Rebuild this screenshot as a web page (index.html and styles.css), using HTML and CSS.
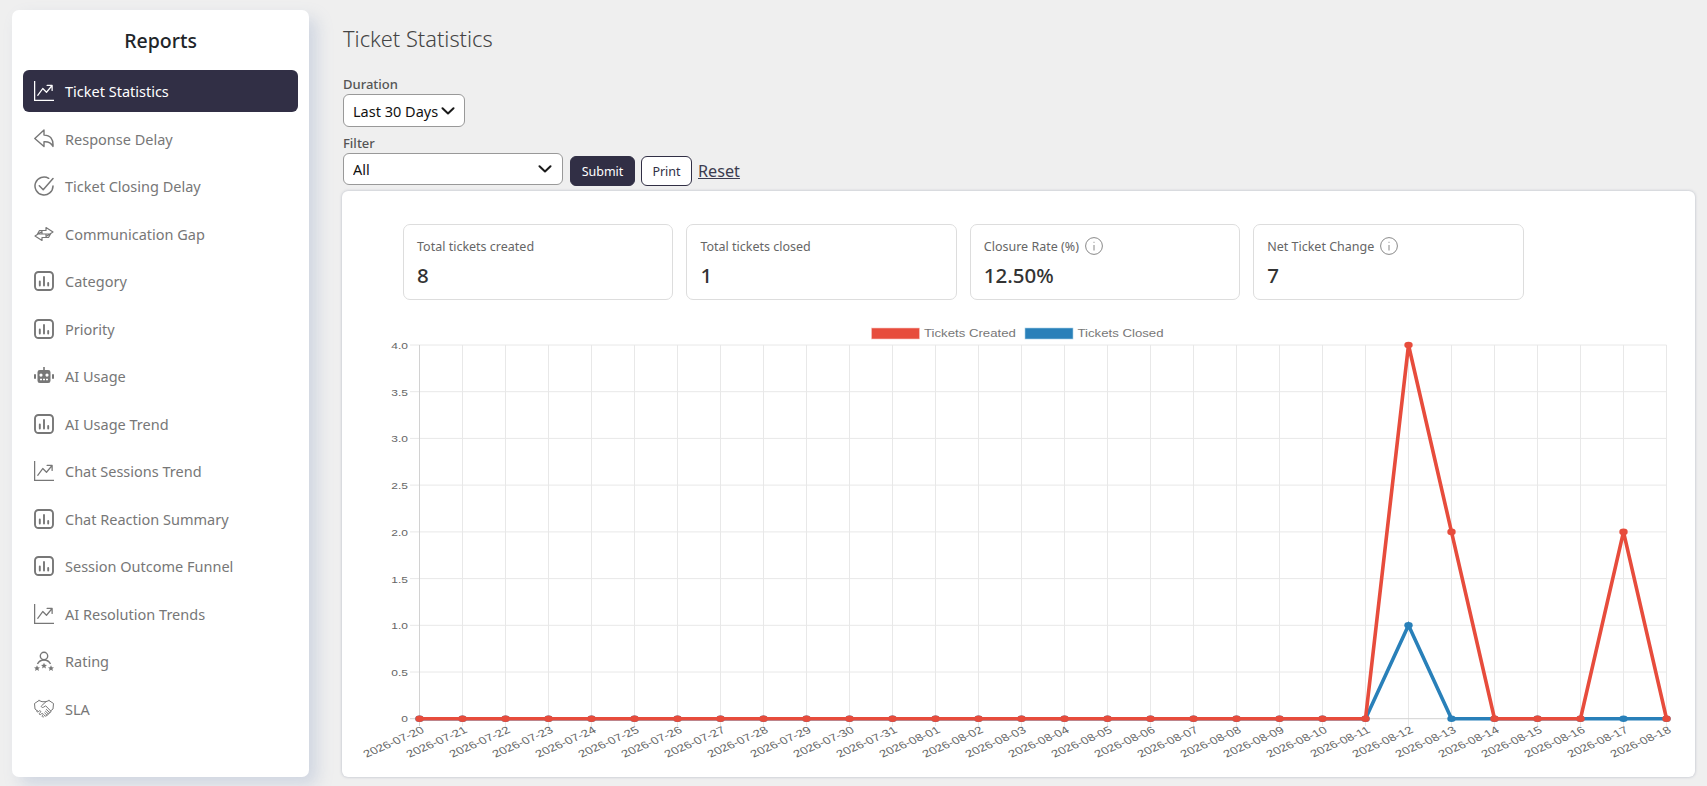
FILE: index.html
```html
<!DOCTYPE html>
<html lang="en">
<head>
<meta charset="utf-8">
<title>Ticket Statistics</title>
<link rel="stylesheet" href="styles.css">
</head>
<body>
<svg class="defs" aria-hidden="true">
  <symbol id="i-trend" viewBox="0 0 16 16"><path fill="currentColor" fill-rule="evenodd" d="M0 0h1v15h15v1H0zm10 3.5a.5.5 0 0 1 .5-.5h4a.5.5 0 0 1 .5.5v4a.5.5 0 0 1-1 0V4.9l-3.613 4.417a.5.5 0 0 1-.74.037L7.06 6.767l-3.656 5.027a.5.5 0 0 1-.808-.588l4-5.5a.5.5 0 0 1 .758-.06l2.609 2.61L13.445 4H10.5a.5.5 0 0 1-.5-.5"/></symbol>
  <symbol id="i-bars" viewBox="0 0 20 20"><rect x="1" y="1" width="18" height="18" rx="3.5" fill="none" stroke="currentColor" stroke-width="1.9"/><path d="M5.800 10.500v4M10 6v8.500M14.200 12v2.500" fill="none" stroke="currentColor" stroke-width="1.900" stroke-linecap="round"/></symbol>
  <symbol id="i-chev" viewBox="0 0 14 8"><path d="M1.500 1.200 7 6.500l5.500-5.300" fill="none" stroke="#1a1a1a" stroke-width="2" stroke-linecap="round" stroke-linejoin="round"/></symbol>
  <marker id="dot-r" viewBox="-5 -5 10 10" markerUnits="userSpaceOnUse" markerWidth="10" markerHeight="10"><ellipse rx="4.200" ry="3.300" fill="#e74c3c"/></marker>
  <marker id="dot-b" viewBox="-5 -5 10 10" markerUnits="userSpaceOnUse" markerWidth="10" markerHeight="10"><ellipse rx="4.200" ry="3.300" fill="#2980b9"/></marker>
</svg>
<div class="app">
  <aside class="sidebar">
    <h2 class="side-title">Reports</h2>
    <nav class="menu">
      <a class="item active"><svg class="ico"><use href="#i-trend"/></svg><span>Ticket Statistics</span></a>
      <a class="item"><svg class="ico" viewBox="0 0 20 20"><path d="M10 1 .8 9.500l9.200 8V12.800h1.200c3.400 0 6 1.300 7.800 4.700.6-7.500-2.800-11.400-9-11.400z" fill="none" stroke="currentColor" stroke-width="1.400" stroke-linejoin="round"/></svg><span>Response Delay</span></a>
      <a class="item"><svg class="ico" viewBox="0 0 20 20"><path d="M19 10a9 9 0 1 1-4.300-7.700M5.300 9.800l3.900 3.900 9.800-11.200" fill="none" stroke="currentColor" stroke-width="1.500" stroke-linecap="round" stroke-linejoin="round"/></svg><span>Ticket Closing Delay</span></a>
      <a class="item"><svg class="ico" viewBox="0 0 20 20"><path d="M3.500 10 5.500 6.500H12v-3L19 8l-7 4.500V10zM16.500 10l-2 3.500H8v3L1 12l7-4.500V10z" fill="none" stroke="currentColor" stroke-width="1.200" stroke-linejoin="round"/></svg><span>Communication Gap</span></a>
      <a class="item"><svg class="ico"><use href="#i-bars"/></svg><span>Category</span></a>
      <a class="item"><svg class="ico"><use href="#i-bars"/></svg><span>Priority</span></a>
      <a class="item"><svg class="ico" viewBox="0 0 20 20"><path fill="currentColor" fill-rule="evenodd" d="M9.200 1h1.600v3h3.400a2.300 2.300 0 0 1 2.300 2.300v8.400a2.300 2.300 0 0 1-2.300 2.300H5.800a2.300 2.300 0 0 1-2.300-2.300V6.300A2.300 2.300 0 0 1 5.800 4h3.400zM7 7.500a1.600 1.600 0 1 0 0 3.200 1.600 1.600 0 0 0 0-3.200zm6 0a1.600 1.600 0 1 0 0 3.200 1.600 1.600 0 0 0 0-3.200zM6 12.800v1.500h2v-1.500zm3 0v1.500h2v-1.500zm3 0v1.500h2v-1.500z"/><rect x="0" y="8" width="2" height="5" rx="1" fill="currentColor"/><rect x="18" y="8" width="2" height="5" rx="1" fill="currentColor"/></svg><span>AI Usage</span></a>
      <a class="item"><svg class="ico"><use href="#i-bars"/></svg><span>AI Usage Trend</span></a>
      <a class="item"><svg class="ico"><use href="#i-trend"/></svg><span>Chat Sessions Trend</span></a>
      <a class="item"><svg class="ico"><use href="#i-bars"/></svg><span>Chat Reaction Summary</span></a>
      <a class="item"><svg class="ico"><use href="#i-bars"/></svg><span>Session Outcome Funnel</span></a>
      <a class="item"><svg class="ico"><use href="#i-trend"/></svg><span>AI Resolution Trends</span></a>
      <a class="item"><svg class="ico" viewBox="0 0 20 20"><circle cx="10" cy="5" r="3.700" fill="none" stroke="currentColor" stroke-width="1.400"/><path d="M3.500 13C4.800 10.300 7 9 10 9s5.200 1.300 6.500 4" fill="none" stroke="currentColor" stroke-width="1.400"/><path fill="currentColor" d="M3 14.300l.9 1.900 2.100.2-1.600 1.400.5 2.100L3 18.800l-1.900 1.100.5-2.100L0 16.400l2.100-.2zM10 11.800l.9 1.900 2.100.2-1.600 1.400.5 2.100-1.900-1.100-1.900 1.100.5-2.100-1.600-1.400 2.100-.2zM17 14.300l.9 1.900 2.100.2-1.600 1.400.5 2.100-1.900-1.100-1.900 1.100.5-2.100-1.600-1.400 2.100-.2z"/></svg><span>Rating</span></a>
      <a class="item"><svg class="ico" viewBox="0 0 20 20"><g fill="none" stroke="currentColor" stroke-width="1" stroke-linejoin="round" stroke-linecap="round"><path d="M5 1.500.5 4.500 1 10l2.500 2M15 1.500l4.500 3L19 10l-2.500 2"/><path d="M5 1.500l3 1.200h4l3-1.200"/><path d="M12 2.700 7.500 6.800c-.8 1.300 1 2.300 2.200 1.300l2-1.300 5 5.200c.8 1-.4 2-1.300 1.300l-3-2.800"/><path d="M15.400 13.300c.6 1-.4 1.900-1.300 1.300l-2.600-2.300M14.100 14.600c.5 1-.5 1.900-1.400 1.300l-2-1.900M12.700 15.900c.4 1-.7 1.700-1.500 1.100L10 16"/><path d="M3 11.500c-.8.900.3 2 1.200 1.300l1-.9c.9-.7 2 .3 1.300 1.300l-1 1c-.8.900.4 2 1.300 1.200l.9-.8c.9-.6 1.900.4 1.300 1.300l-.7.800c-.7 1 .9 1.900 1.700.9"/></g></svg><span>SLA</span></a>
    </nav>
  </aside>
  <main class="main">
    <h1 class="page-title">Ticket Statistics</h1>
    <label class="field-label" for="duration">Duration</label>
    <div class="row">
      <div class="select-wrap"><select id="duration" class="select select-short"><option>Last 30 Days</option></select><svg class="chev chev-short"><use href="#i-chev"/></svg></div>
    </div>
    <label class="field-label label-filter" for="filter">Filter</label>
    <div class="row actions">
      <div class="select-wrap"><select id="filter" class="select select-wide"><option>All</option></select><svg class="chev chev-wide"><use href="#i-chev"/></svg></div>
      <button class="btn btn-dark">Submit</button>
      <button class="btn btn-outline">Print</button>
      <a class="reset">Reset</a>
    </div>
    <section class="card">
      <div class="stats">
        <div class="stat"><div class="stat-label">Total tickets created</div><div class="stat-value">8</div></div>
        <div class="stat"><div class="stat-label">Total tickets closed</div><div class="stat-value">1</div></div>
        <div class="stat"><div class="stat-label">Closure Rate (%)<svg class="info" viewBox="0 0 18 18"><circle cx="9" cy="9" r="8.400"/><path d="M9 8v5.500M9 4.800v1"/></svg></div><div class="stat-value">12.50%</div></div>
        <div class="stat"><div class="stat-label">Net Ticket Change<svg class="info" viewBox="0 0 18 18"><circle cx="9" cy="9" r="8.400"/><path d="M9 8v5.500M9 4.800v1"/></svg></div><div class="stat-value">7</div></div>
      </div>
      <svg class="chart" viewBox="342 314 1352 462">
        <path class="grid" d="M410 345H1666.500M410 391.700H1666.500M410 438.400H1666.500M410 485.100H1666.500M410 531.900H1666.500M410 578.600H1666.500M410 625.300H1666.500M410 672H1666.500M462.500 345V726M505.500 345V726M548.500 345V726M591.500 345V726M634.500 345V726M677.500 345V726M720.500 345V726M763.500 345V726M806.500 345V726M849.500 345V726M892.500 345V726M935.500 345V726M978.500 345V726M1021.500 345V726M1064.500 345V726M1107.500 345V726M1150.500 345V726M1193.500 345V726M1236.500 345V726M1279.500 345V726M1322.500 345V726M1365.500 345V726M1408.500 345V726M1451.500 345V726M1494.500 345V726M1537.500 345V726M1580.500 345V726M1623.500 345V726M1666.500 345V726"/>
        <path class="grid-zero" d="M419.500 345V726M410 718.700H1666.500"/>
        <g class="legend">
          <rect class="box-red" x="871.500" y="328" width="48" height="11"/>
          <text transform="translate(924 337) scale(1.200 .92)">Tickets Created</text>
          <rect class="box-blue" x="1025" y="328" width="48" height="11"/>
          <text transform="translate(1077.500 337) scale(1.200 .92)">Tickets Closed</text>
        </g>
        <g class="ticks-y">
          <text transform="translate(408 349) scale(1.200 .92)">4.0</text>
          <text transform="translate(408 395.700) scale(1.200 .92)">3.5</text>
          <text transform="translate(408 442.400) scale(1.200 .92)">3.0</text>
          <text transform="translate(408 489.100) scale(1.200 .92)">2.5</text>
          <text transform="translate(408 535.900) scale(1.200 .92)">2.0</text>
          <text transform="translate(408 582.600) scale(1.200 .92)">1.5</text>
          <text transform="translate(408 629.300) scale(1.200 .92)">1.0</text>
          <text transform="translate(408 676) scale(1.200 .92)">0.5</text>
          <text transform="translate(408 721.700) scale(1.200 .92)">0</text>
        </g>
        <polyline class="line-blue" points="419.500 718.700 462.500 718.700 505.500 718.700 548.500 718.700 591.500 718.700 634.500 718.700 677.500 718.700 720.500 718.700 763.500 718.700 806.500 718.700 849.500 718.700 892.500 718.700 935.500 718.700 978.500 718.700 1021.500 718.700 1064.500 718.700 1107.500 718.700 1150.500 718.700 1193.500 718.700 1236.500 718.700 1279.500 718.700 1322.500 718.700 1365.500 718.700 1408.500 625.300 1451.500 718.700 1494.500 718.700 1537.500 718.700 1580.500 718.700 1623.500 718.700 1666.500 718.700"/>
        <polyline class="line-red" points="419.500 718.700 462.500 718.700 505.500 718.700 548.500 718.700 591.500 718.700 634.500 718.700 677.500 718.700 720.500 718.700 763.500 718.700 806.500 718.700 849.500 718.700 892.500 718.700 935.500 718.700 978.500 718.700 1021.500 718.700 1064.500 718.700 1107.500 718.700 1150.500 718.700 1193.500 718.700 1236.500 718.700 1279.500 718.700 1322.500 718.700 1365.500 718.700 1408.500 345 1451.500 531.900 1494.500 718.700 1537.500 718.700 1580.500 718.700 1623.500 531.900 1666.500 718.700"/>
        <g class="ticks-x">
          <text transform="translate(425 732) scale(1.200 .92) rotate(-30)">2026-07-20</text>
          <text transform="translate(468 732) scale(1.200 .92) rotate(-30)">2026-07-21</text>
          <text transform="translate(511 732) scale(1.200 .92) rotate(-30)">2026-07-22</text>
          <text transform="translate(554 732) scale(1.200 .92) rotate(-30)">2026-07-23</text>
          <text transform="translate(597 732) scale(1.200 .92) rotate(-30)">2026-07-24</text>
          <text transform="translate(640 732) scale(1.200 .92) rotate(-30)">2026-07-25</text>
          <text transform="translate(683 732) scale(1.200 .92) rotate(-30)">2026-07-26</text>
          <text transform="translate(726 732) scale(1.200 .92) rotate(-30)">2026-07-27</text>
          <text transform="translate(769 732) scale(1.200 .92) rotate(-30)">2026-07-28</text>
          <text transform="translate(812 732) scale(1.200 .92) rotate(-30)">2026-07-29</text>
          <text transform="translate(855 732) scale(1.200 .92) rotate(-30)">2026-07-30</text>
          <text transform="translate(898 732) scale(1.200 .92) rotate(-30)">2026-07-31</text>
          <text transform="translate(941 732) scale(1.200 .92) rotate(-30)">2026-08-01</text>
          <text transform="translate(984 732) scale(1.200 .92) rotate(-30)">2026-08-02</text>
          <text transform="translate(1027 732) scale(1.200 .92) rotate(-30)">2026-08-03</text>
          <text transform="translate(1070 732) scale(1.200 .92) rotate(-30)">2026-08-04</text>
          <text transform="translate(1113 732) scale(1.200 .92) rotate(-30)">2026-08-05</text>
          <text transform="translate(1156 732) scale(1.200 .92) rotate(-30)">2026-08-06</text>
          <text transform="translate(1199 732) scale(1.200 .92) rotate(-30)">2026-08-07</text>
          <text transform="translate(1242 732) scale(1.200 .92) rotate(-30)">2026-08-08</text>
          <text transform="translate(1285 732) scale(1.200 .92) rotate(-30)">2026-08-09</text>
          <text transform="translate(1328 732) scale(1.200 .92) rotate(-30)">2026-08-10</text>
          <text transform="translate(1371 732) scale(1.200 .92) rotate(-30)">2026-08-11</text>
          <text transform="translate(1414 732) scale(1.200 .92) rotate(-30)">2026-08-12</text>
          <text transform="translate(1457 732) scale(1.200 .92) rotate(-30)">2026-08-13</text>
          <text transform="translate(1500 732) scale(1.200 .92) rotate(-30)">2026-08-14</text>
          <text transform="translate(1543 732) scale(1.200 .92) rotate(-30)">2026-08-15</text>
          <text transform="translate(1586 732) scale(1.200 .92) rotate(-30)">2026-08-16</text>
          <text transform="translate(1629 732) scale(1.200 .92) rotate(-30)">2026-08-17</text>
          <text transform="translate(1672 732) scale(1.200 .92) rotate(-30)">2026-08-18</text>
        </g>
      </svg>
    </section>
  </main>
</div>
</body>
</html>
```
FILE: styles.css
```css
* { box-sizing: border-box; }
html, body { margin: 0; height: 100%; }
body { background: #efefef; font-family: "Noto Sans", "Open Sans", sans-serif; color: #333; overflow: hidden; }
.defs { width: 0; height: 0; display: block; }
.app { display: flex; gap: 33px; height: 786px; padding: 10px 12px 9px; }
.sidebar { width: 297px; flex: none; background: #fff; border-radius: 7px; padding: 0 11px; box-shadow: 8px 8px 16px rgba(130, 150, 190, .28); }
.side-title { margin: 0; padding-top: 16px; height: 60px; line-height: 30px; text-align: center; font-size: 19.5px; font-weight: 500; color: #212529; }
.menu { display: flex; flex-direction: column; gap: 5.5px; }
.item { display: flex; align-items: center; gap: 11px; height: 42px; padding: 0 11px; border-radius: 6px; color: #777; font-size: 14.5px; }
.item.active { background: #312f45; color: #fff; }
.ico { width: 20px; height: 20px; flex: none; }
.main { flex: 1; min-width: 0; display: flex; flex-direction: column; }
.page-title { margin: 14px 0 0 1px; height: 30px; line-height: 30px; font-size: 21.8px; font-weight: 300; color: #444; }
.field-label { display: block; margin: 21px 0 1px 1px; height: 18px; line-height: 18px; font-size: 13px; font-weight: 500; color: #555; }
.label-filter { margin-top: 7px; }
.row { display: flex; }
.actions { align-items: flex-end; gap: 6px; }
.select-wrap { position: relative; display: flex; margin-left: 1px; }
.select { height: 33px; padding: 0 20px 0 9px; border: 1px solid #999; border-radius: 6px; background-color: #fff; font-family: inherit; font-size: 14.5px; color: #111; appearance: none; }
.select-short { width: 122px; }
.select-wide { width: 220px; height: 32px; }
.chev { position: absolute; width: 14px; height: 8px; pointer-events: none; }
.chev-short { left: 98px; top: 13px; }
.chev-wide { left: 195px; top: 12px; }
.btn { height: 30px; margin-bottom: -1px; border-radius: 6px; font-family: inherit; font-size: 12.5px; padding: 0; }
.btn-dark { width: 65px; margin-left: 1px; background: #312f45; border: 1px solid #312f45; color: #fff; }
.btn-outline { width: 51px; background: #fff; border: 1px solid #312f45; color: #312f45; }
.reset { margin-bottom: -1px; font-size: 16.2px; line-height: 30px; height: 30px; color: #3c3c50; text-decoration: underline; }
.card { flex: 1; margin-top: 6px; background: #fff; border-radius: 6px; box-shadow: 0 0 3px rgba(90, 100, 130, .4); overflow: hidden; }
.stats { display: flex; gap: 13px; padding: 33px 0 0 61px; }
.stat { width: 270.4px; height: 76px; padding: 11px 13px; border: 1px solid #ddd; border-radius: 7px; }
.stat-label { display: flex; align-items: center; gap: 6px; height: 20px; font-size: 12.5px; color: #666; }
.stat-value { margin-top: 4px; font-size: 20.5px; font-weight: 500; line-height: 30px; color: #333; }
.info { width: 18px; height: 18px; flex: none; fill: none; stroke: #888; stroke-width: 1; }
.chart { display: block; width: 1352px; height: 462px; margin-top: 14px; font-family: "Liberation Sans", Arial, sans-serif; }
.grid { fill: none; stroke: #e8e8e8; stroke-width: 1; }
.grid-zero { fill: none; stroke: #d2d2d2; stroke-width: 1; }
.legend text { font-size: 11px; fill: #777; }
.box-red { fill: #e74c3c; stroke: #f7c6c1; stroke-width: .6; }
.box-blue { fill: #2980b9; stroke: #a9cfe8; stroke-width: .6; }
.ticks-y text { font-size: 10px; fill: #666; text-anchor: end; }
.ticks-x text { font-size: 11px; fill: #666; text-anchor: end; }
.line-red, .line-blue { fill: none; stroke-width: 3.6; stroke-linejoin: miter; }
.line-red { stroke: #e74c3c; marker: url(#dot-r); }
.line-blue { stroke: #2980b9; marker: url(#dot-b); }
```
